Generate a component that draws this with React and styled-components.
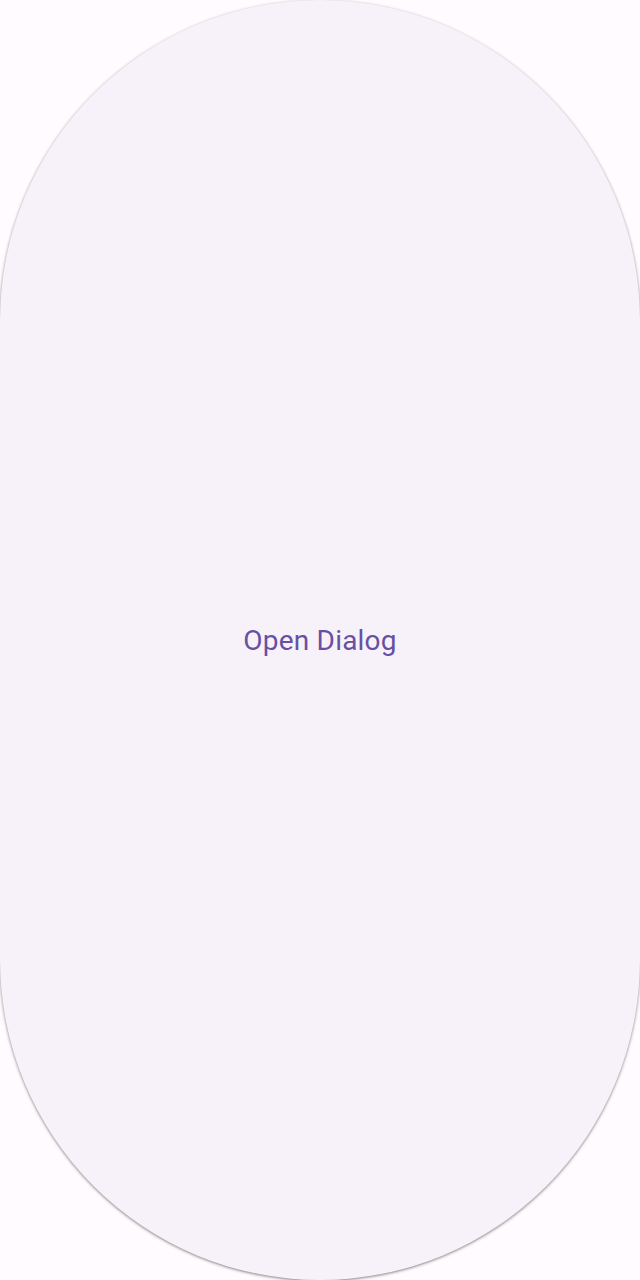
import React from "react";
import styled, { createGlobalStyle } from "styled-components";

const Global = createGlobalStyle`
  html, body { margin: 0; padding: 0; background: #fffbfe; }
  #root { width: 640px; height: 1280px; }
`;

const Page = styled.div`
  width: 640px;
  height: 1280px;
  display: flex;
  background: #fffbfe;
`;

const StadiumButton = styled.button`
  flex: 1;
  margin: 0;
  padding: 2px 0 0;
  border: none;
  border-radius: 320px;
  background: #f7f2fa;
  box-shadow: 0 1px 2px rgba(0, 0, 0, 0.3), 0 1px 3px 1px rgba(0, 0, 0, 0.15);
  color: #6750a4;
  font-family: Roboto, "Noto Sans", sans-serif;
  font-size: 28px;
  font-weight: 400;
  letter-spacing: 0.2px;
  line-height: 1;
  display: flex;
  align-items: center;
  justify-content: center;
  cursor: pointer;
`;

export default function App() {
  return (
    <Page>
      <Global />
      <StadiumButton>Open Dialog</StadiumButton>
    </Page>
  );
}
